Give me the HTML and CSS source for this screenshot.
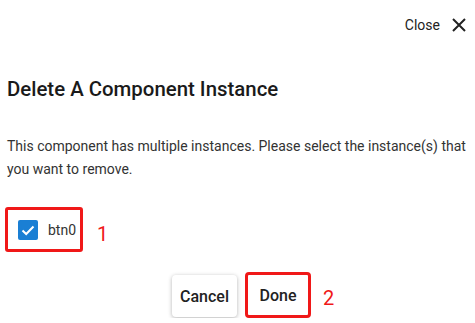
FILE: index.html
```html
<!DOCTYPE html>
<html lang="en">
<head>
  <meta charset="UTF-8">
  <meta name="viewport" content="width=device-width, initial-scale=1.0">
  <title>Delete A Component Instance</title>

  <link rel="stylesheet" href="styles.css">
</head>
<body>
  <div class="dialog">
    <div class="top-bar">
      <button class="close-btn">
        <span>Close</span>
        <svg width="14" height="14" viewBox="0 0 14 14">
          <path d="M1 1 L13 13 M13 1 L1 13" stroke="#222" stroke-width="2" fill="none"/>
        </svg>
      </button>
    </div>
    <h1 class="title">Delete A Component Instance</h1>
    <p class="desc">This component has multiple instances. Please select the instance(s) that you want to remove.</p>
    <div class="instances">
      <label class="instance marked">
        <span class="check">
          <svg width="20" height="20" viewBox="0 0 20 20">
            <path d="M4.5 10.5 L8.2 14 L15.5 6.5" stroke="#fff" stroke-width="2" fill="none"/>
          </svg>
        </span>
        <span class="instance-name">btn0</span>
        <span class="step">1</span>
      </label>
    </div>
    <div class="actions">
      <button class="btn">Cancel</button>
      <button class="btn marked">Done<span class="step">2</span></button>
    </div>
  </div>
</body>
</html>
```

FILE: styles.css
```css
body {
    margin: 0;
    background-color: #fff;
    font-family: Roboto, "Liberation Sans", Arial, sans-serif;
    color: #222;
}
.dialog {
    padding: 0 7px;
}
.top-bar {
    display: flex;
    justify-content: flex-end;
    padding-top: 17px;
    padding-right: 2px;
}
.close-btn {
    display: flex;
    align-items: center;
    gap: 12px;
    border: none;
    background: none;
    padding: 0;
    font-family: inherit;
    font-size: 14px;
    color: #222;
    cursor: pointer;
}
.title {
    margin: 44px 0 0 0;
    font-size: 20.4px;
    font-weight: 500;
    color: #1a1a1a;
    line-height: 24px;
}
.desc {
    margin: 34px 0 0 0;
    font-size: 14px;
    line-height: 23px;
    color: #333;
}
.instances {
    margin-top: 26px;
    display: flex;
}
.instance {
    position: relative;
    display: flex;
    align-items: center;
    gap: 10px;
    padding: 10px 4px 9px 10px;
    margin-left: -2px;
    font-size: 14px;
    color: #333;
}
.check {
    width: 20px;
    height: 20px;
    border-radius: 2px;
    background-color: #1a7fd4;
    display: flex;
}
.marked {
    border: 3px solid #f01818;
    border-radius: 3px;
}
.step {
    position: absolute;
    color: #f01818;
    font-size: 20px;
    font-weight: 400;
}
.instance .step {
    left: 89px;
    top: 12px;
}
.actions {
    display: flex;
    justify-content: center;
    gap: 8px;
    margin-top: 23px;
    padding-left: 8px;
}
.btn {
    position: relative;
    width: 65px;
    height: 42px;
    border: none;
    border-radius: 4px;
    background-color: #fff;
    box-shadow: 0 1px 4px rgba(0, 0, 0, 0.3);
    font-family: inherit;
    font-size: 16px;
    font-weight: 500;
    color: #222;
    cursor: pointer;
}
.btn.marked {
    width: 66px;
    height: 46px;
    margin-top: -3px;
    border: 3px solid #f01818;
    box-shadow: none;
}
.btn .step {
    left: 75px;
    top: 11px;
}
```
